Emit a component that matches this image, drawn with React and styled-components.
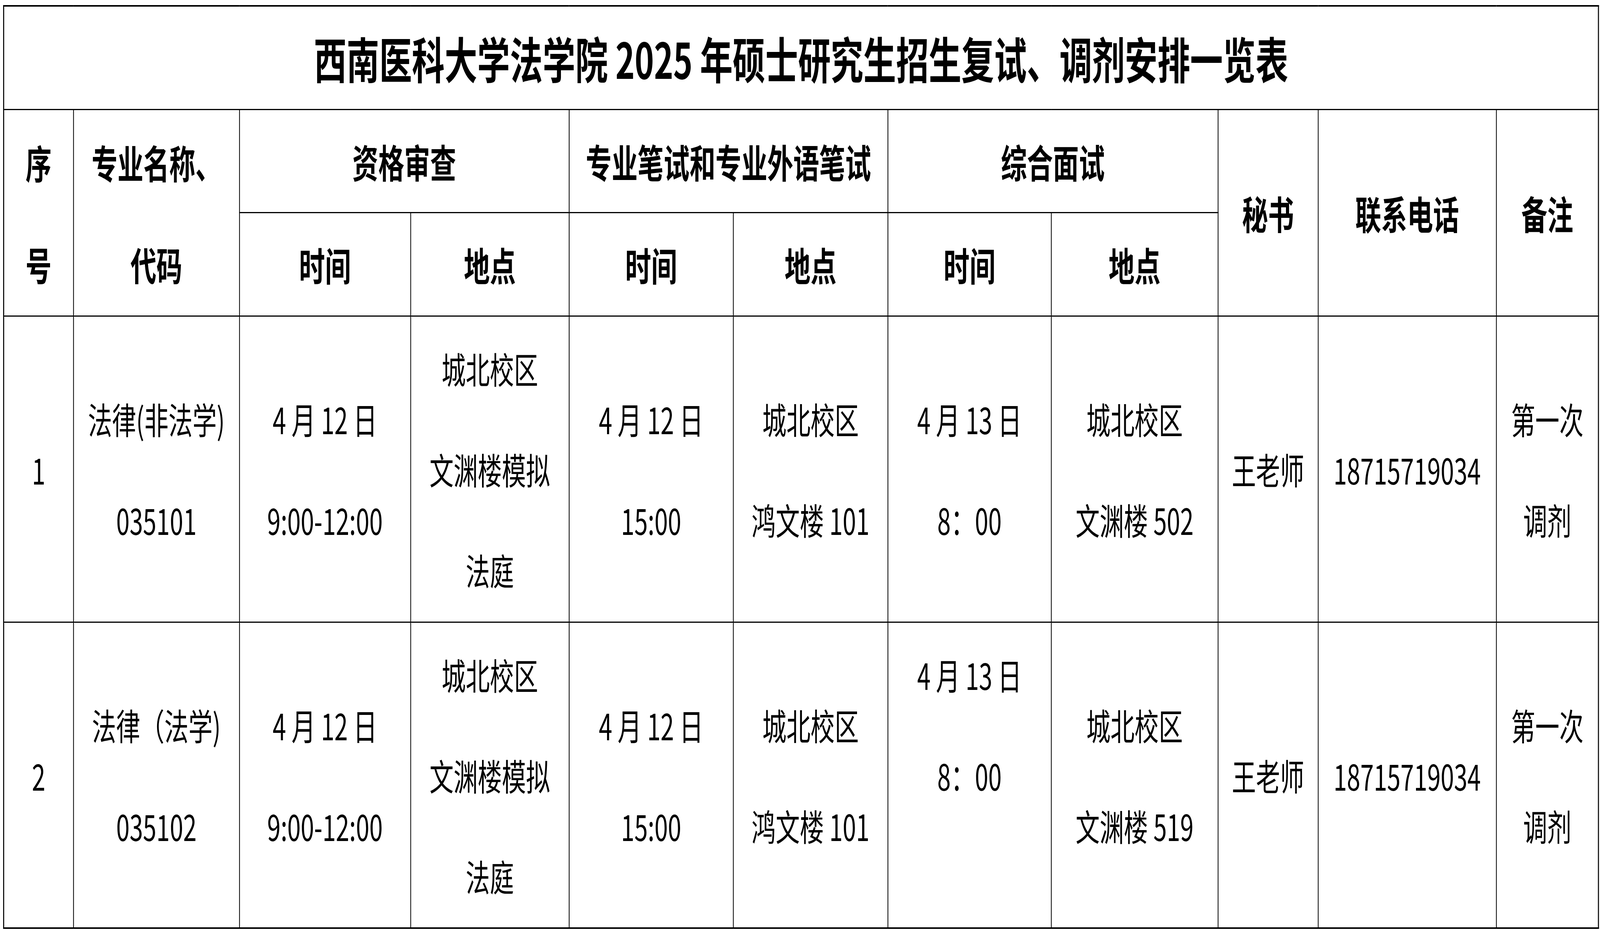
import React, { useEffect, useState } from 'react'
import styled, { createGlobalStyle } from 'styled-components'

const DESIGN_W = 6169
const DESIGN_H = 2387

const GlobalStyle = createGlobalStyle`
  html, body {
    margin: 0;
    padding: 0;
    background: #fff;
    overflow: hidden;
  }
  body {
    font-family: "Noto Sans CJK SC", "Microsoft YaHei", sans-serif;
    color: #000;
  }
`

const Viewport = styled.div`
  width: 100vw;
  height: 100vh;
  overflow: hidden;
`

const Page = styled.div`
  box-sizing: border-box;
  width: 6169px;
  height: 2387px;
  padding: 13px 0 0 12px;
  transform-origin: 0 0;
`

const Table = styled.table`
  border-collapse: collapse;
  table-layout: fixed;
  width: 6149px;
  border: 4px solid #000;
`

const Row = styled.tr`
  height: ${({ $h }) => $h}px;
`

const TitleCell = styled.td`
  border: 3px solid #000;
  padding: 0;
  text-align: center;
  vertical-align: middle;
  font-size: 126px;
  font-weight: 700;
  line-height: 1.2;
  white-space: nowrap;
`

const HeadCell = styled.td`
  border: 3px solid #000;
  padding: 0;
  text-align: center;
  vertical-align: middle;
  font-size: 100px;
  font-weight: 700;
  line-height: 261px;
  white-space: nowrap;
`

const DataCell = styled.td`
  border: 3px solid #000;
  padding: 0;
  text-align: center;
  vertical-align: middle;
  font-size: 93px;
  font-weight: 400;
  line-height: 258px;
  white-space: nowrap;
`

const Line = styled.div`
  min-height: 1em;
`

const cols = [269, 640, 660, 611, 633, 596, 630, 643, 386, 687, 394]

const rows = [
  {
    no: '1',
    major: ['法律(非法学)', '035101'],
    checkTime: ['4 月 12 日', '9:00-12:00'],
    checkPlace: ['城北校区', '文渊楼模拟', '法庭'],
    examTime: ['4 月 12 日', '15:00'],
    examPlace: ['城北校区', '鸿文楼 101'],
    talkTime: ['4 月 13 日', '8：00'],
    talkPlace: ['城北校区', '文渊楼 502'],
  },
  {
    no: '2',
    major: ['法律（法学)', '035102'],
    checkTime: ['4 月 12 日', '9:00-12:00'],
    checkPlace: ['城北校区', '文渊楼模拟', '法庭'],
    examTime: ['4 月 12 日', '15:00'],
    examPlace: ['城北校区', '鸿文楼 101'],
    talkTime: ['4 月 13 日', '8：00', ''],
    talkPlace: ['城北校区', '文渊楼 519'],
  },
]

const Lines = ({ items }) => items.map((t, i) => <Line key={i}>{t || '\u00a0'}</Line>)

// the sheet is laid out at the reference size, then fitted to the window the page really gets
const fitScale = () => {
  if (typeof window === 'undefined') return { x: 1, y: 1 }
  return {
    x: Math.min(1, window.innerWidth / DESIGN_W),
    y: Math.min(1, window.innerHeight / DESIGN_H),
  }
}

export default function App() {
  const [scale, setScale] = useState(fitScale)

  useEffect(() => {
    const onResize = () => setScale(fitScale())
    window.addEventListener('resize', onResize)
    return () => window.removeEventListener('resize', onResize)
  }, [])

  return (
    <Viewport>
      <GlobalStyle />
      <Page style={{ transform: `scale(${scale.x}, ${scale.y})` }}>
        <Table>
          <colgroup>
            {cols.map((w, i) => <col key={i} style={{ width: w }} />)}
          </colgroup>
          <tbody>
            <Row $h={265}>
              <TitleCell colSpan={11}>西南医科大学法学院 2025 年硕士研究生招生复试、调剂安排一览表</TitleCell>
            </Row>
            <Row $h={263}>
              <HeadCell rowSpan={2}><Lines items={['序', '号']} /></HeadCell>
              <HeadCell rowSpan={2}><Lines items={['专业名称、', '代码']} /></HeadCell>
              <HeadCell colSpan={2}>资格审查</HeadCell>
              <HeadCell colSpan={2}>专业笔试和专业外语笔试</HeadCell>
              <HeadCell colSpan={2}>综合面试</HeadCell>
              <HeadCell rowSpan={2}>秘书</HeadCell>
              <HeadCell rowSpan={2}>联系电话</HeadCell>
              <HeadCell rowSpan={2}>备注</HeadCell>
            </Row>
            <Row $h={265}>
              <HeadCell>时间</HeadCell>
              <HeadCell>地点</HeadCell>
              <HeadCell>时间</HeadCell>
              <HeadCell>地点</HeadCell>
              <HeadCell>时间</HeadCell>
              <HeadCell>地点</HeadCell>
            </Row>
            {rows.map((r) => (
              <Row $h={784} key={r.no}>
                <DataCell>{r.no}</DataCell>
                <DataCell><Lines items={r.major} /></DataCell>
                <DataCell><Lines items={r.checkTime} /></DataCell>
                <DataCell><Lines items={r.checkPlace} /></DataCell>
                <DataCell><Lines items={r.examTime} /></DataCell>
                <DataCell><Lines items={r.examPlace} /></DataCell>
                <DataCell><Lines items={r.talkTime} /></DataCell>
                <DataCell><Lines items={r.talkPlace} /></DataCell>
                <DataCell>王老师</DataCell>
                <DataCell>18715719034</DataCell>
                <DataCell><Lines items={['第一次', '调剂']} /></DataCell>
              </Row>
            ))}
          </tbody>
        </Table>
      </Page>
    </Viewport>
  )
}
